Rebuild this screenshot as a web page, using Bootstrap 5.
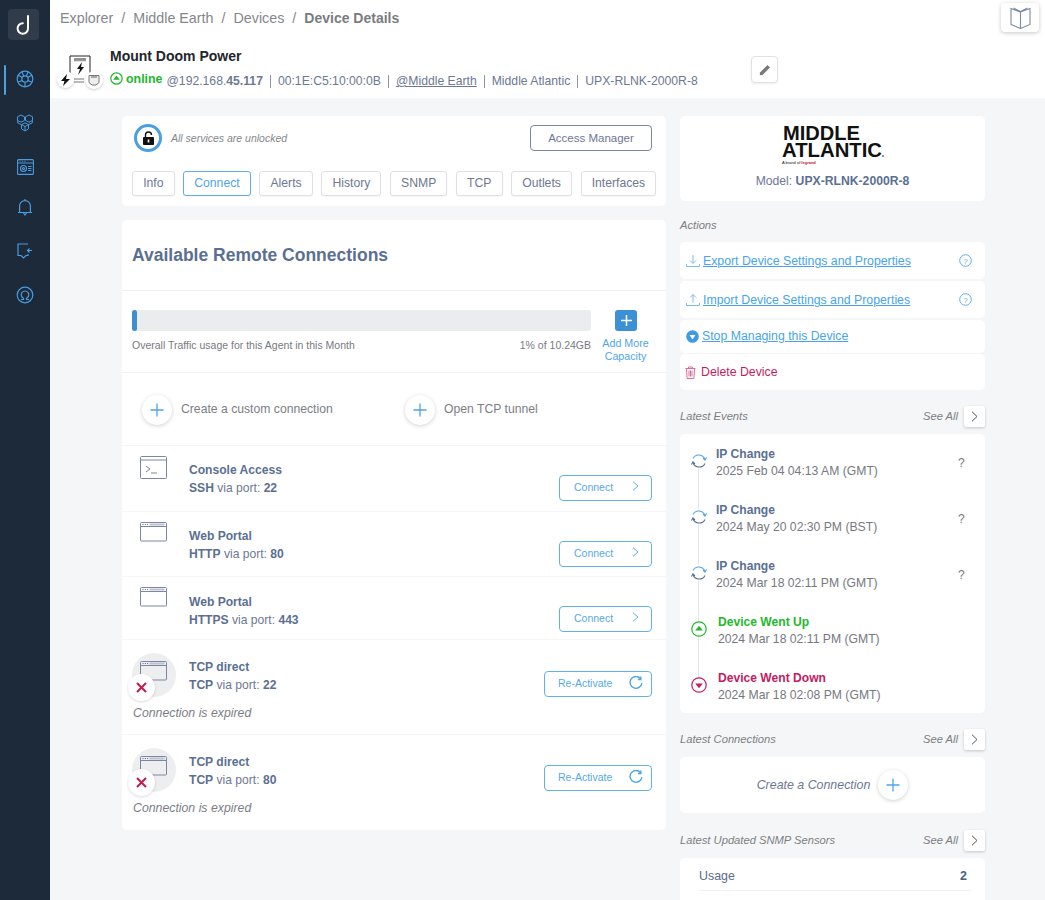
<!DOCTYPE html>
<html lang="en">
<head>
<meta charset="UTF-8">
<title>Device Details</title>
<link href="https://cdn.jsdelivr.net/npm/bootstrap@5.3.0/dist/css/bootstrap.min.css" rel="stylesheet">
<style>
html,body{height:900px;overflow:hidden}
body{font-family:"Liberation Sans",Arial,sans-serif;background:#f5f6f7;color:#5b6b8b;font-size:13px}
svg{display:block;flex:none}
.side-bar{width:50px;height:900px;background:#1c2a39;flex:none;padding-top:9px;position:relative}
.side-logo{width:31px;height:31px;background:#303c4a;border-radius:4px;margin:0 0 0 8px;color:#fff}
.side-list{margin-top:23px;gap:12px}
.side-item{height:32px;position:relative}
.side-item.bell{margin-top:-4px}
.side-item.on::before{content:"";position:absolute;left:4px;top:2px;width:2px;height:30px;background:#4aa3e0;border-radius:1px}
.page-main{flex:1;min-width:0}
.top-head{height:98px;background:#fff;position:relative}
.crumbs{padding:10px 0 0 10px;font-size:14.3px;color:#85878c;height:44px;line-height:16px}
.crumbs i{font-style:normal;margin:0 8px}
.crumbs b{color:#7a7c82;font-size:14px}
.guide-btn{position:absolute;left:951px;top:3px;width:38px;height:29px;border-radius:4px;background:#fff;box-shadow:0 1px 4px rgba(0,0,0,.22)}
.dev-ico{position:absolute;left:10px;top:52px;width:46px;height:40px}
.round-w{position:absolute;border-radius:50%;background:#fff;box-shadow:0 1px 3px rgba(0,0,0,.2)}
.dev-name{position:absolute;left:60px;top:48px;font-size:14px;font-weight:700;color:#23262b;line-height:17px}
.dev-line{position:absolute;left:60px;top:71px;display:flex;align-items:center;white-space:nowrap;font-size:12.2px;line-height:20px;color:#6d7892}
.dev-line .ok{color:#1fb82e;font-weight:700;font-size:12.4px;margin:0 4px 0 3px;position:relative;top:-2px}
.dev-line u{color:#6d7892}
.dev-line .bar{width:1px;height:13px;background:#8c93a4;margin:0 7px}
.edit-btn{position:absolute;left:701px;top:56px;width:27px;height:27px;border:1px solid #e2e3e6;border-radius:4px;background:#fff;box-shadow:0 1px 2px rgba(0,0,0,.08)}
.body-wrap{padding:18px 0 0 72px;gap:14px}
.left-col{width:544px;flex:none}
.right-col{width:305px;flex:none}
.white-box{background:#fff;border-radius:5px}
.lock-box{height:90px;margin-bottom:14px;padding:8px 10px 0}
.lock-ring{width:28px;height:28px;border:3px solid #4a9fe3;border-radius:50%;margin-left:2px}
.lock-txt{font-size:10.5px;font-style:italic;color:#85878c;margin-left:9px;position:relative;top:1px}
.acc-btn{width:122px;height:26px;border:1px solid #7d86a0;border-radius:4px;font-size:11.5px;color:#6d7892;background:#fff;padding:1px 0 0;margin-right:4px}
.tab-row{margin-top:19px;gap:8.5px}
.tab-btn{height:25px;border:1px solid #dfe0e3;border-radius:3px;font-size:12.2px;color:#6d7892;background:#fff;padding:0 10.15px;line-height:23px;box-shadow:0 1px 1px rgba(0,0,0,.04)}
.tab-btn.on{border-color:#5eaeea;color:#4ea6e6}
.sec-head{height:71px;padding:25px 0 0 10px;font-size:17.5px;font-weight:700;color:#5b6f92;line-height:20px;border-bottom:1px solid #f1f2f3;margin-bottom:1px}
.use-row{height:81px;padding:18px 10px 0;position:relative;border-bottom:1px solid #f1f2f3;margin-bottom:1px}
.use-track{width:459px;height:21px;background:#e9eded;border-radius:3px;position:relative}
.use-fill{height:21px;background:#3f8fcf;border-radius:3px;display:block}
.use-txt{width:459px;font-size:10.5px;color:#77797f;margin-top:7px;line-height:14px}
.add-sq{position:absolute;left:493px;top:18px;width:22px;height:21px;background:#3b90d6;border-radius:3px;color:#fff}
.add-txt{position:absolute;left:473px;top:45px;width:61px;text-align:center;font-size:10.7px;line-height:12.5px;color:#4ea6e6}
.new-row{height:72px;border-bottom:1px solid #f5f5f6;padding-left:20px;gap:9px;margin-bottom:1px}
.plus-round{width:30px;height:30px;border-radius:50%;background:#fff;box-shadow:0 1px 4px rgba(0,0,0,.18);flex:none}
.new-txt{font-size:12.2px;color:#7c7e84;width:215px}
.conn-row{position:relative;border-bottom:1px solid #f6f6f7;margin-bottom:1px;padding-left:67px}
.conn-row.h1{height:65px;padding-top:15px}
.conn-row.h2{height:64px;padding-top:15px}
.conn-row.h3{height:62px;padding-top:16px}
.conn-row.h4{height:94px;padding-top:18px}
.conn-row.last{border:0;margin:0;height:94px;padding-top:18px}
.conn-t{font-size:12.1px;font-weight:700;color:#5b6f92;line-height:17.5px}
.conn-d{font-size:12.1px;color:#6d7892;line-height:17.5px}
.conn-d b{color:#5b6f92}
.win-ico{position:absolute;left:18px;top:9px}
.h4 .win-ico{top:20px}
.exp-bg{position:absolute;left:10px;top:12px;width:44px;height:44px;border-radius:50%;background:#eceeef}
.exp-x{position:absolute;left:6px;top:33px;width:27px;height:27px;border-radius:50%;background:#fff;box-shadow:0 1px 3px rgba(0,0,0,.15)}
.exp-txt{position:absolute;left:11px;top:65px;font-size:12.3px;font-style:italic;color:#7c7e84;line-height:15px}
.go-btn{position:absolute;right:14px;top:28px;width:93px;height:26px;border:1px solid #62b0ea;border-radius:4px;background:#fff;color:#56a9e8;font-size:10.5px;padding:0 10px 0 14px}
.go-btn span{position:relative;top:-1px}
.go-btn.wide{width:108px;top:30px;padding:0 8px 0 13px}
.last .go-btn.wide{top:29px}
.logo-box{height:85px;margin-bottom:15px;text-align:center;padding-top:2px}
.logo-svg{margin:0 auto}
.model-txt{font-size:12.2px;color:#6d7892;margin-top:8px;line-height:15px}
.model-txt b{color:#5b6f92}
.lbl{font-size:11.2px;font-style:italic;color:#7c7e84;line-height:14px}
.act-item{padding-left:6px;padding-right:13px;gap:3px;font-size:12.3px}
.act-item a{color:#47a5ea;position:relative;top:1px}
.h-a{height:37px;margin-bottom:2px}
.h-b{height:33px;margin-bottom:1px}
.h-c{height:36px}
.del-txt{color:#c21c62}
.side-head{height:24px;margin-top:14px;margin-bottom:6px}
.see-btn{width:21px;height:21px;background:#fff;border-radius:2px;box-shadow:0 1px 3px rgba(0,0,0,.2);margin-left:6px}
.ev-box{height:279px;padding:12px 0 0 11px;position:relative;margin-bottom:14px}
.ev-line{position:absolute;left:18px;top:30px;width:1px;height:225px;background:#e3e4e6}
.ev-item{height:56px;position:relative;padding-left:25px}
.ev-item.up,.ev-item.dn{padding-left:27px}
.ev-ico{position:absolute;left:0;top:7px;background:#fff}
.ev-t{font-size:12.1px;font-weight:700;line-height:17px;color:#5b6f92}
.up .ev-t{color:#1fb82e}
.dn .ev-t{color:#c21c62}
.ev-d{font-size:12.2px;line-height:17px;color:#77797f}
.ev-q{position:absolute;left:267px;top:8px;font-size:12px;color:#77797f}
.mk-box{height:56px;margin-bottom:15px;font-size:12.4px;font-style:italic;color:#6d7892;gap:8px}
.snmp-box{height:60px;padding:9px 14px 0 19px;font-size:12.4px}
.snmp-box b{color:#485f82}
.snmp-in{border-bottom:1px solid #f2f2f3;height:24px;padding-right:4px}
</style>
</head>
<body class="d-flex">
<div class="side-bar">
  <div class="side-logo d-flex align-items-center justify-content-center">
    <svg width="18" height="22" viewBox="0 0 18 22" fill="none" stroke="#fff" stroke-width="2" stroke-linecap="round"><path d="M13 2v12.5a5.2 5.2 0 1 1-5.2-5.2"/></svg>
  </div>
  <div class="side-list d-flex flex-column">
    <div class="side-item on d-flex justify-content-center align-items-center">
      <svg width="18" height="18" viewBox="0 0 18 18" fill="none" stroke="#4a9be0" stroke-width="1.2"><circle cx="9" cy="9" r="7.8"/><circle cx="9" cy="9" r="3.2"/><path d="M6.2 7.4 2 5M11.8 7.4 16 5M9 12.2V16.8M6 2l1.6 4M12 2l-1.6 4M2 12l4.4-1.4M16 12l-4.4-1.4"/></svg>
    </div>
    <div class="side-item d-flex justify-content-center align-items-center">
      <svg width="18" height="18" viewBox="0 0 18 18" fill="none" stroke="#4a9be0" stroke-width="1"><path d="M5 1 8.500 2.800v3.600L5 8.200 1.500 6.400V2.800zM13 1l3.500 1.800v3.600L13 8.200 9.500 6.400V2.800zM9 8.800l3.500 1.800v4.200L9 17l-3.500-2.200v-4.200zM5.500 10.600 9 12.600l3.500-2M9 12.600V17M1.500 6.400 1.800 9l3.700 1.600M16.500 6.400 16.200 9l-3.700 1.600"/></svg>
    </div>
    <div class="side-item d-flex justify-content-center align-items-center">
      <svg width="17" height="16" viewBox="0 0 17 16" fill="none" stroke="#4a9be0" stroke-width="1.1"><rect x=".6" y=".6" width="15.800" height="14.800" rx="1"/><path d="M.6 4h15.800M2.500 2.300h1M5 2.300h1M7.500 2.300h1M11 7.500h3.500M11 9.500h3.500M11 11.500h3.500"/><circle cx="6.500" cy="9.500" r="3"/><circle cx="6.500" cy="9.500" r="1"/></svg>
    </div>
    <div class="side-item bell d-flex justify-content-center align-items-center">
      <svg width="16" height="18" viewBox="0 0 16 18" fill="none" stroke="#4a9be0" stroke-width="1.2"><path d="M1 14.500h14M2.600 14.500V8a5.400 5.400 0 0 1 10.800 0v6.500M8 1v1.500M6.500 15l1.500 2 1.500-2"/></svg>
    </div>
    <div class="side-item d-flex justify-content-center align-items-center">
      <svg width="18" height="18" viewBox="0 0 18 18" fill="none" stroke="#4a9be0" stroke-width="1.2"><path d="M12 2H2v11.500h3L7.500 16l2.500-2.500h2V12M16 8.500h-4.500M13.500 6.500l-2 2 2 2"/></svg>
    </div>
    <div class="side-item d-flex justify-content-center align-items-center">
      <svg width="18" height="18" viewBox="0 0 18 18" fill="none" stroke="#4a9be0" stroke-width="1.2"><circle cx="9" cy="9" r="7.800"/><path d="M5 13.500h2.500v-1.200a3.800 3.800 0 1 1 3 0v1.200H13"/></svg>
    </div>
  </div>
</div>

<div class="page-main">
  <div class="top-head">
    <div class="crumbs">Explorer<i>/</i>Middle Earth<i>/</i>Devices<i>/</i><b>Device Details</b></div>
    <div class="guide-btn d-flex align-items-center justify-content-center">
      <svg width="21" height="22" viewBox="0 0 21 22" fill="none" stroke="#7d8aa3" stroke-width="1.1"><path d="M10.500 5 1 1.500v16l9.500 4 9.500-4v-16zM10.500 5v16.500M3.500 1l7 3.500L17.500 1"/></svg>
    </div>
    <div class="dev-ico">
      <svg width="24" height="30" viewBox="0 0 24 30" fill="none" stroke="#555" stroke-width="1" style="position:absolute;left:9px;top:3px"><path d="M1 22V1h20v21M5 4h12" stroke="#222"/><path d="M5 5.500h12" stroke="#999" stroke-width="1.500"/><path d="M13 7 8 14h3l-2 6 6-8h-3z" fill="#111" stroke="none"/><path d="M5 24h10M5 27h10" stroke="#777" stroke-width="1.200"/></svg>
      <span class="round-w d-flex align-items-center justify-content-center" style="left:-3px;top:19px;width:17px;height:17px"><svg width="9" height="12" viewBox="0 0 9 12"><path d="M6 0 0 7h3.500L2 12l7-7H5z" fill="#111"/></svg></span>
      <span class="round-w d-flex align-items-center justify-content-center" style="left:25px;top:19px;width:18px;height:18px"><svg width="12" height="12" viewBox="0 0 12 12" fill="#eee" stroke="#777"><path d="M1 1.500h10v7L8 11H4L1 8.500z"/><path d="M3 3h6" stroke-width="1.200"/></svg></span>
    </div>
    <div class="dev-name">Mount Doom Power</div>
    <div class="dev-line">
      <svg width="13" height="13" viewBox="0 0 13 13" fill="none" style="position:relative;top:-3px"><circle cx="6.500" cy="6.500" r="5.700" stroke="#1fb82e" stroke-width="1.200"/><path d="M6.500 3.600 9.800 7.800H3.200z" fill="#1fb82e"/></svg>
      <span class="ok">online</span>
      <span>@192.168.<b>45.117</b></span><span class="bar"></span>
      <span>00:1E:C5:10:00:0B</span><span class="bar"></span>
      <span><u>@Middle Earth</u></span><span class="bar"></span>
      <span>Middle Atlantic</span><span class="bar"></span>
      <span>UPX-RLNK-2000R-8</span>
    </div>
    <div class="edit-btn d-flex align-items-center justify-content-center">
      <svg width="12" height="12" viewBox="0 0 12 12"><path d="M8.500 1 11 3.500 3.500 11 .8 11.200 1 8.500z" fill="#77797f"/></svg>
    </div>
  </div>

  <div class="body-wrap d-flex">
    <div class="left-col">
      <div class="white-box lock-box">
        <div class="d-flex align-items-center">
          <div class="lock-ring d-flex align-items-center justify-content-center">
            <svg width="11" height="14" viewBox="0 0 11 14"><path d="M2.500 6V4a3 3 0 0 1 6 0" fill="none" stroke="#111" stroke-width="1.400"/><rect x="0" y="6" width="11" height="8" rx="1" fill="#111"/><rect x="4.700" y="8.500" width="1.600" height="3" fill="#fff"/></svg>
          </div>
          <span class="lock-txt">All services are unlocked</span>
          <button type="button" class="acc-btn ms-auto">Access Manager</button>
        </div>
        <div class="tab-row d-flex">
          <span class="tab-btn">Info</span>
          <span class="tab-btn on">Connect</span>
          <span class="tab-btn">Alerts</span>
          <span class="tab-btn">History</span>
          <span class="tab-btn">SNMP</span>
          <span class="tab-btn">TCP</span>
          <span class="tab-btn">Outlets</span>
          <span class="tab-btn">Interfaces</span>
        </div>
      </div>

      <div class="white-box">
        <div class="sec-head">Available Remote Connections</div>
        <div class="use-row">
          <div class="use-track"><span class="use-fill" style="width:5px"></span></div>
          <div class="use-txt d-flex justify-content-between"><span>Overall Traffic usage for this Agent in this Month</span><span>1% of 10.24GB</span></div>
          <div class="add-sq d-flex align-items-center justify-content-center"><svg width="13" height="13" viewBox="0 0 13 13" stroke="#fff" stroke-width="1.500"><path d="M6.500 1v11M1 6.500h11"/></svg></div>
          <div class="add-txt">Add More Capacity</div>
        </div>
        <div class="new-row d-flex align-items-center">
          <span class="plus-round d-flex align-items-center justify-content-center"><svg width="14" height="14" viewBox="0 0 14 14" stroke="#4ea6e6" stroke-width="1.300"><path d="M7 .5v13M.5 7h13"/></svg></span>
          <span class="new-txt">Create a custom connection</span>
          <span class="plus-round d-flex align-items-center justify-content-center"><svg width="14" height="14" viewBox="0 0 14 14" stroke="#4ea6e6" stroke-width="1.300"><path d="M7 .5v13M.5 7h13"/></svg></span>
          <span class="new-txt">Open TCP tunnel</span>
        </div>

        <div class="conn-row h1">
          <svg class="win-ico" width="27" height="24" viewBox="0 0 27 24" fill="none" stroke="#7d86a0"><rect x=".5" y=".5" width="26" height="22" rx="1"/><path d="M.5 4h26"/><path d="M6 10l4 3-4 3M11 17h6"/></svg>
          <div class="conn-t">Console Access</div>
          <div class="conn-d"><b>SSH</b> via port: <b>22</b></div>
          <button type="button" class="go-btn d-flex align-items-center justify-content-between"><span>Connect</span><svg width="7" height="10" viewBox="0 0 7 10" fill="none" stroke="#62b0ea" style="margin:-4px 2px 0 0"><path d="M1 .7 6 5 1 9.300"/></svg></button>
        </div>
        <div class="conn-row h2">
          <svg class="win-ico" width="27" height="20" viewBox="0 0 27 20" fill="none" stroke="#7d86a0"><rect x=".5" y=".5" width="26" height="18.500" rx="1"/><path d="M.5 4.500h26"/><path d="M9.500 2.500h15" stroke="#bcc3d0" stroke-width="2"/><path d="M2.500 2.500h1M4.800 2.500h1M7.100 2.500h1" stroke="#5b6b8b"/></svg>
          <div class="conn-t">Web Portal</div>
          <div class="conn-d"><b>HTTP</b> via port: <b>80</b></div>
          <button type="button" class="go-btn d-flex align-items-center justify-content-between"><span>Connect</span><svg width="7" height="10" viewBox="0 0 7 10" fill="none" stroke="#62b0ea" style="margin:-4px 2px 0 0"><path d="M1 .7 6 5 1 9.300"/></svg></button>
        </div>
        <div class="conn-row h3">
          <svg class="win-ico" width="27" height="20" viewBox="0 0 27 20" fill="none" stroke="#7d86a0"><rect x=".5" y=".5" width="26" height="18.500" rx="1"/><path d="M.5 4.500h26"/><path d="M9.500 2.500h15" stroke="#bcc3d0" stroke-width="2"/><path d="M2.500 2.500h1M4.800 2.500h1M7.100 2.500h1" stroke="#5b6b8b"/></svg>
          <div class="conn-t">Web Portal</div>
          <div class="conn-d"><b>HTTPS</b> via port: <b>443</b></div>
          <button type="button" class="go-btn d-flex align-items-center justify-content-between"><span>Connect</span><svg width="7" height="10" viewBox="0 0 7 10" fill="none" stroke="#62b0ea" style="margin:-4px 2px 0 0"><path d="M1 .7 6 5 1 9.300"/></svg></button>
        </div>
        <div class="conn-row h4">
          <span class="exp-bg"></span>
          <svg class="win-ico" width="27" height="20" viewBox="0 0 27 20" fill="none" stroke="#7d86a0"><rect x=".5" y=".5" width="26" height="18.500" rx="1"/><path d="M.5 4.500h26"/><path d="M9.500 2.500h15" stroke="#bcc3d0" stroke-width="2"/><path d="M2.500 2.500h1M4.800 2.500h1M7.100 2.500h1" stroke="#5b6b8b"/></svg>
          <span class="exp-x d-flex align-items-center justify-content-center"><svg width="11" height="11" viewBox="0 0 11 11" stroke="#c21c4f" stroke-width="2"><path d="M1 1l9 9M10 1l-9 9"/></svg></span>
          <div class="conn-t">TCP direct</div>
          <div class="conn-d"><b>TCP</b> via port: <b>22</b></div>
          <div class="exp-txt">Connection is expired</div>
          <button type="button" class="go-btn wide d-flex align-items-center justify-content-between"><span>Re-Activate</span><svg width="14" height="14" viewBox="0 0 13 13" fill="none" stroke="#4ea6e6" stroke-width="1.300" style="margin:-3px 0 0 0"><path d="M10.800 2.500A5.500 5.500 0 1 0 12 6.500"/><path d="M11 .5v2.700H8.300"/></svg></button>
        </div>
        <div class="conn-row h4 last">
          <span class="exp-bg"></span>
          <svg class="win-ico" width="27" height="20" viewBox="0 0 27 20" fill="none" stroke="#7d86a0"><rect x=".5" y=".5" width="26" height="18.500" rx="1"/><path d="M.5 4.500h26"/><path d="M9.500 2.500h15" stroke="#bcc3d0" stroke-width="2"/><path d="M2.500 2.500h1M4.800 2.500h1M7.100 2.500h1" stroke="#5b6b8b"/></svg>
          <span class="exp-x d-flex align-items-center justify-content-center"><svg width="11" height="11" viewBox="0 0 11 11" stroke="#c21c4f" stroke-width="2"><path d="M1 1l9 9M10 1l-9 9"/></svg></span>
          <div class="conn-t">TCP direct</div>
          <div class="conn-d"><b>TCP</b> via port: <b>80</b></div>
          <div class="exp-txt">Connection is expired</div>
          <button type="button" class="go-btn wide d-flex align-items-center justify-content-between"><span>Re-Activate</span><svg width="14" height="14" viewBox="0 0 13 13" fill="none" stroke="#4ea6e6" stroke-width="1.300" style="margin:-3px 0 0 0"><path d="M10.800 2.500A5.500 5.500 0 1 0 12 6.500"/><path d="M11 .5v2.700H8.300"/></svg></button>
        </div>
      </div>
    </div>

    <div class="right-col">
      <div class="white-box logo-box">
        <svg class="logo-svg" width="104" height="48" viewBox="0 -6 104 48" font-family="Liberation Sans" font-weight="700" fill="#111">
          <text x="2" y="16" font-size="20" textLength="77" lengthAdjust="spacingAndGlyphs">MIDDLE</text>
          <text x="1" y="33" font-size="20" textLength="100" lengthAdjust="spacingAndGlyphs">ATLANTIC</text>
          <circle cx="102" cy="32" r=".8"/>
          <text x="1" y="40" font-size="4" font-weight="400">A brand of <tspan fill="#c8102e" font-weight="700">legrand</tspan></text>
        </svg>
        <div class="model-txt">Model: <b>UPX-RLNK-2000R-8</b></div>
      </div>
      <div class="lbl" style="margin-bottom:10px;margin-top:17px">Actions</div>
      <div class="white-box act-item h-a d-flex align-items-center">
        <svg width="14" height="14" viewBox="0 0 14 14" fill="none" stroke="#7cbcec" stroke-width="1"><path d="M7 1v8M4 6.500 7 9.500l3-3M.5 10v2.500h13V10"/></svg>
        <a href="#">Export Device Settings and Properties</a>
        <svg class="ms-auto" width="13" height="13" viewBox="0 0 13 13" fill="none" stroke="#5eaeea"><circle cx="6.500" cy="6.500" r="5.800"/><text x="6.500" y="9.500" font-size="8" text-anchor="middle" fill="#5eaeea" stroke="none" font-family="Liberation Sans">?</text></svg>
      </div>
      <div class="white-box act-item h-a d-flex align-items-center">
        <svg width="14" height="14" viewBox="0 0 14 14" fill="none" stroke="#7cbcec" stroke-width="1"><path d="M7 9.500V1.500M4 4.500l3-3 3 3M.5 10v2.500h13V10"/></svg>
        <a href="#">Import Device Settings and Properties</a>
        <svg class="ms-auto" width="13" height="13" viewBox="0 0 13 13" fill="none" stroke="#5eaeea"><circle cx="6.500" cy="6.500" r="5.800"/><text x="6.500" y="9.500" font-size="8" text-anchor="middle" fill="#5eaeea" stroke="none" font-family="Liberation Sans">?</text></svg>
      </div>
      <div class="white-box act-item h-b d-flex align-items-center">
        <svg width="13" height="13" viewBox="0 0 13 13"><circle cx="6.500" cy="6.500" r="6.300" fill="#3f9ae2"/><path d="M3.500 5h6L6.500 9.500z" fill="#fff"/></svg>
        <a href="#" style="top:0">Stop Managing this Device</a>
      </div>
      <div class="white-box act-item h-c d-flex align-items-center del-txt" style="padding-left:4px;gap:4px">
        <svg width="13" height="13" viewBox="0 0 13 13" fill="none" stroke="#d9709c"><path d="M1.500 2.500h10M4.500 2.500V1h4v1.500M2.500 2.500l.6 10h6.800l.6-10M5 4.500v6M6.500 4.500v6M8 4.500v6"/></svg>
        <span>Delete Device</span>
      </div>

      <div class="side-head d-flex align-items-center lbl">
        <span>Latest Events</span><span class="ms-auto">See All</span>
        <span class="see-btn d-flex align-items-center justify-content-center"><svg width="7" height="11" viewBox="0 0 7 11" fill="none" stroke="#555"><path d="M1 .7 6 5.500 1 10.300"/></svg></span>
      </div>
      <div class="white-box ev-box">
        <span class="ev-line"></span>
        <div class="ev-item">
          <svg class="ev-ico" width="16" height="16" viewBox="0 0 16 16" fill="none" stroke-width="1.100"><path d="M2 5.500A6.500 6.500 0 0 1 14 6.500" stroke="#4ea6e6"/><path d="M14 10.500A6.500 6.500 0 0 1 2 9.500" stroke="#5b6f92"/><path d="M12 5l2 2 1.500-2.500" stroke="#4ea6e6"/><path d="M4 11 2 9 .5 11.500" stroke="#5b6f92"/></svg>
          <div class="ev-t">IP Change</div><div class="ev-d">2025 Feb 04 04:13 AM (GMT)</div><span class="ev-q">?</span>
        </div>
        <div class="ev-item">
          <svg class="ev-ico" width="16" height="16" viewBox="0 0 16 16" fill="none" stroke-width="1.100"><path d="M2 5.500A6.500 6.500 0 0 1 14 6.500" stroke="#4ea6e6"/><path d="M14 10.500A6.500 6.500 0 0 1 2 9.500" stroke="#5b6f92"/><path d="M12 5l2 2 1.500-2.500" stroke="#4ea6e6"/><path d="M4 11 2 9 .5 11.500" stroke="#5b6f92"/></svg>
          <div class="ev-t">IP Change</div><div class="ev-d">2024 May 20 02:30 PM (BST)</div><span class="ev-q">?</span>
        </div>
        <div class="ev-item">
          <svg class="ev-ico" width="16" height="16" viewBox="0 0 16 16" fill="none" stroke-width="1.100"><path d="M2 5.500A6.500 6.500 0 0 1 14 6.500" stroke="#4ea6e6"/><path d="M14 10.500A6.500 6.500 0 0 1 2 9.500" stroke="#5b6f92"/><path d="M12 5l2 2 1.500-2.500" stroke="#4ea6e6"/><path d="M4 11 2 9 .5 11.500" stroke="#5b6f92"/></svg>
          <div class="ev-t">IP Change</div><div class="ev-d">2024 Mar 18 02:11 PM (GMT)</div><span class="ev-q">?</span>
        </div>
        <div class="ev-item up">
          <svg class="ev-ico" width="16" height="16" viewBox="0 0 16 16" fill="#fff"><circle cx="8" cy="8" r="7.200" stroke="#1fb82e" stroke-width="1.200"/><path d="M8 4.700 11.800 9.500H4.200z" fill="#1fb82e"/></svg>
          <div class="ev-t">Device Went Up</div><div class="ev-d">2024 Mar 18 02:11 PM (GMT)</div>
        </div>
        <div class="ev-item dn">
          <svg class="ev-ico" width="16" height="16" viewBox="0 0 16 16" fill="#fff"><circle cx="8" cy="8" r="7.200" stroke="#c21c62" stroke-width="1.200"/><path d="M8 11.300 11.800 6.500H4.200z" fill="#c21c62"/></svg>
          <div class="ev-t">Device Went Down</div><div class="ev-d">2024 Mar 18 02:08 PM (GMT)</div>
        </div>
      </div>

      <div class="side-head d-flex align-items-center lbl">
        <span>Latest Connections</span><span class="ms-auto">See All</span>
        <span class="see-btn d-flex align-items-center justify-content-center"><svg width="7" height="11" viewBox="0 0 7 11" fill="none" stroke="#555"><path d="M1 .7 6 5.500 1 10.300"/></svg></span>
      </div>
      <div class="white-box mk-box d-flex align-items-center justify-content-center">
        <span>Create a Connection</span>
        <span class="plus-round d-flex align-items-center justify-content-center"><svg width="14" height="14" viewBox="0 0 14 14" stroke="#4ea6e6" stroke-width="1.300"><path d="M7 .5v13M.5 7h13"/></svg></span>
      </div>

      <div class="side-head d-flex align-items-center lbl">
        <span>Latest Updated SNMP Sensors</span><span class="ms-auto">See All</span>
        <span class="see-btn d-flex align-items-center justify-content-center"><svg width="7" height="11" viewBox="0 0 7 11" fill="none" stroke="#555"><path d="M1 .7 6 5.500 1 10.300"/></svg></span>
      </div>
      <div class="white-box snmp-box">
        <div class="snmp-in d-flex justify-content-between"><span>Usage</span><b>2</b></div>
      </div>
    </div>
  </div>
</div>
<script src="https://cdn.jsdelivr.net/npm/bootstrap@5.3.0/dist/js/bootstrap.bundle.min.js"></script>
</body>
</html>
